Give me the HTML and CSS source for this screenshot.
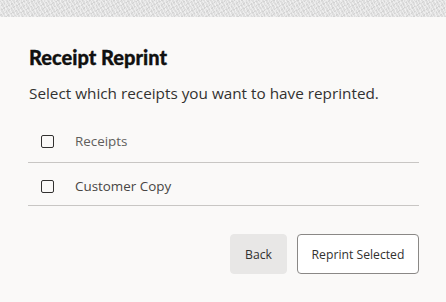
FILE: index.html
```html
<!DOCTYPE html>
<html lang="en">
<head>
<meta charset="utf-8">
<title>Receipt Reprint</title>
<link rel="stylesheet" href="styles.css">
</head>
<body>
<div class="strip"></div>
<div class="dialog">
  <h1 class="title">Receipt Reprint</h1>
  <p class="subtitle">Select which receipts you want to have reprinted.</p>
  <div class="list">
    <label class="row header">
      <span class="box"></span>
      <span class="label">Receipts</span>
    </label>
    <label class="row">
      <span class="box"></span>
      <span class="label">Customer Copy</span>
    </label>
  </div>
  <div class="actions">
    <button class="btn btn-back">Back</button>
    <button class="btn btn-primary">Reprint Selected</button>
  </div>
</div>
</body>
</html>
```
FILE: styles.css
```css
html, body {
  margin: 0;
  padding: 0;
  background: #faf9f8;
  font-family: "Open Sans", "Noto Sans", sans-serif;
  color: #323130;
}
.strip {
  height: 17px;
  background-color: #dedede;
  background-image:
    repeating-linear-gradient(60deg, rgba(255,255,255,0.45) 0 1px, transparent 1px 3px),
    repeating-linear-gradient(-30deg, rgba(190,190,190,0.35) 0 1px, transparent 1px 4px),
    repeating-linear-gradient(90deg, rgba(255,255,255,0.3) 0 1px, transparent 1px 5px);
}
.dialog {
  padding: 26px 27px 0 28px;
}
.title {
  margin: 0 0 0 1px;
  font-family: Lato, "Open Sans", sans-serif;
  font-size: 20px;
  line-height: 28px;
  font-weight: 900;
  color: #111110;
  -webkit-text-stroke: 0.3px #111110;
}
.subtitle {
  margin: 12px 0 0 1px;
  font-size: 15.3px;
  line-height: 20px;
  color: #323130;
}
.list {
  margin-top: 17px;
}
.row {
  display: flex;
  align-items: center;
  height: 42px;
  border-bottom: 1px solid #c8c6c4;
  padding-left: 13px;
}
.row + .row {
  padding-top: 4px;
  height: 38px;
}
.box {
  width: 11px;
  height: 11px;
  border: 1.5px solid #323130;
  border-radius: 2px;
  flex: none;
}
.label {
  margin-left: 21px;
  font-size: 13.4px;
  color: #605e5c;
}
.row + .row .label {
  color: #484644;
}
.actions {
  display: flex;
  justify-content: flex-end;
  gap: 10px;
  margin-top: 28px;
}
.btn {
  height: 40px;
  font-family: inherit;
  font-size: 12.2px;
  color: #323130;
  border-radius: 4px;
  padding: 0;
  white-space: nowrap;
}
.btn-back {
  background: #e8e7e6;
  border: 1px solid #e8e7e6;
  width: 57px;
}
.btn-primary {
  background: #ffffff;
  border: 1px solid #8a8886;
  width: 122px;
}
```
